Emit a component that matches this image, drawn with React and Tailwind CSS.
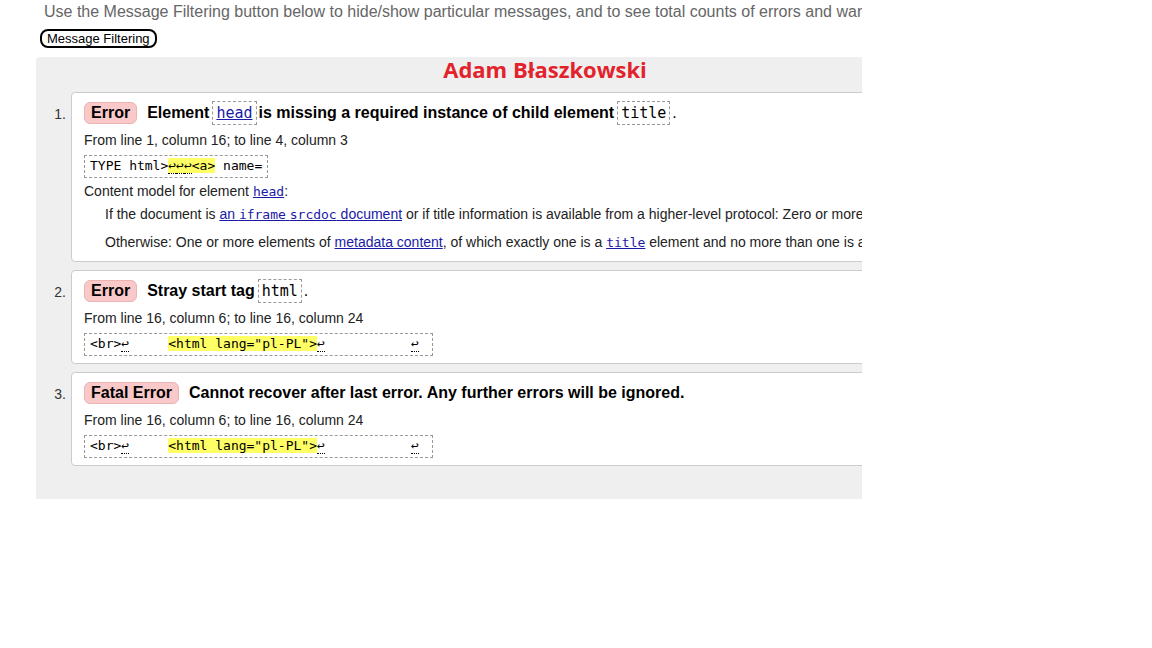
import React from 'react';

const sans = 'font-["Liberation_Sans",Arial,sans-serif]';
const mono = 'font-["DejaVu_Sans_Mono","Liberation_Mono",monospace]';

// line feed marker used inside extracts
const Lf = () => <span className="border-b border-dotted border-black">↩</span>;

const Badge = ({ children }) => (
  <span className="inline-flex h-[22px] items-center rounded-[6px] border border-[#ecb3b3] bg-[#f9c9c9] px-[6px] text-[16px] font-bold text-black">
    {children}
  </span>
);

const CodeBox = ({ children, link }) => (
  <code
    className={`${mono} ml-[3px] mr-[2px] inline-block h-[24px] border border-dashed border-[#999] px-[3px] text-[15px] font-normal leading-[22px] ${
      link ? 'text-[#1a1aa6] underline' : 'text-black'
    }`}
  >
    {children}
  </code>
);

const Extract = ({ children }) => (
  <div className="mt-[3px] h-[23px]">
    <code className={`${mono} inline-block h-[23px] whitespace-pre border border-dashed border-[#999] px-[5px] text-[13px] leading-[20px] text-black`}>
      {children}
    </code>
  </div>
);

const Mark = ({ children }) => <span className="bg-[#ffff66]">{children}</span>;

const Item = ({ n, tall, children }) => (
  <li className="flex">
    <span className="w-[35px] shrink-0 pr-[5px] pt-[14px] text-right text-[14px] leading-[16px] text-[#333]">{n}.</span>
    <div className={`w-[950px] rounded-[4px] border border-[#ccc] bg-white pl-[12px] pt-[8px] ${tall ? 'pb-[8px]' : 'pb-[9px]'}`}>
      {children}
    </div>
  </li>
);

const Heading = ({ children }) => (
  <div className="flex h-[24px] items-center whitespace-nowrap text-[16px] font-bold text-black">{children}</div>
);

const Loc = ({ children }) => <p className="mt-[5px] text-[14px] leading-[20px] text-[#222]">{children}</p>;

const link = 'text-[#1a1aa6] underline';

const BrExtract = () => (
  <Extract>
    {'<br>'}
    <Lf />
    {'     '}
    <Mark>{'<html lang="pl-PL">'}</Mark>
    <Lf />
    {'           '}
    <Lf />
    {' '}
  </Extract>
);

export default function App() {
  return (
    <div className={`${sans} min-h-[648px] bg-white`}>
      <div className="w-[862px] overflow-hidden">
        <p className="ml-[44px] whitespace-nowrap pt-[2px] text-[16px] leading-[20px] text-[#666]">
          Use the Message Filtering button below to hide/show particular messages, and to see total counts of errors and warnings.
        </p>
        <button className="ml-[40px] mt-[7px] h-[19px] rounded-[8px] border-2 border-black bg-white px-[5px] text-[13px] leading-[14px] text-black">
          Message Filtering
        </button>

        <div className="ml-[36px] mt-[7px] w-[1018px] rounded-tl-[4px] bg-[#efefef] pb-[33px]">
          <h2 className='text-center font-["Open_Sans",sans-serif] text-[22px] font-bold leading-[24px] text-[#e3232c]'>
            Adam Błaszkowski
          </h2>

          <ol className="mt-[11px] flex flex-col gap-[8px]">
            <Item n={1} tall>
              <Heading>
                <Badge>Error</Badge>
                <span className="ml-[10px]">Element</span>
                <CodeBox link>head</CodeBox>
                <span>is missing a required instance of child element</span>
                <CodeBox>title</CodeBox>
                <span className="font-normal">.</span>
              </Heading>
              <Loc>From line 1, column 16; to line 4, column 3</Loc>
              <Extract>
                {'TYPE html>'}
                <Mark>
                  <Lf />
                  <Lf />
                  <Lf />
                  {'<a>'}
                </Mark>
                {' name='}
              </Extract>
              <p className="mt-[5px] text-[14px] leading-[20px] text-[#222]">
                Content model for element <a className={`${link} ${mono} text-[13px]`}>head</a>:
              </p>
              <p className="ml-[21px] mt-[2px] whitespace-nowrap text-[14px] leading-[20px] text-[#222]">
                If the document is{' '}
                <a className={link}>
                  an <span className={`${mono} text-[13px]`}>iframe</span> <span className={`${mono} text-[13px]`}>srcdoc</span> document
                </a>{' '}
                or if title information is available from a higher-level protocol: Zero or more
              </p>
              <p className="ml-[21px] mt-[7px] whitespace-nowrap text-[14px] leading-[20px] text-[#222]">
                Otherwise: One or more elements of <a className={link}>metadata content</a>, of which exactly one is a{' '}
                <a className={`${link} ${mono} text-[13px]`}>title</a> element and no more than one is a
              </p>
            </Item>

            <Item n={2}>
              <Heading>
                <Badge>Error</Badge>
                <span className="ml-[10px]">Stray start tag</span>
                <CodeBox>html</CodeBox>
                <span className="font-normal">.</span>
              </Heading>
              <Loc>From line 16, column 6; to line 16, column 24</Loc>
              <BrExtract />
            </Item>

            <Item n={3}>
              <Heading>
                <Badge>Fatal Error</Badge>
                <span className="ml-[10px]">Cannot recover after last error. Any further errors will be ignored.</span>
              </Heading>
              <Loc>From line 16, column 6; to line 16, column 24</Loc>
              <BrExtract />
            </Item>
          </ol>
        </div>
      </div>
    </div>
  );
}
